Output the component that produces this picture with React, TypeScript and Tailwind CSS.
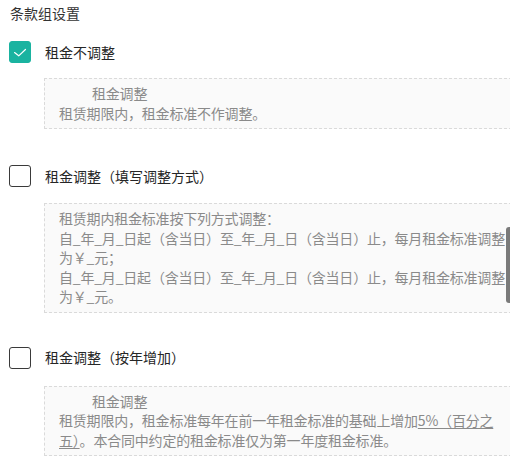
import React, { useState } from "react";

const Check: React.FC<{ checked: boolean; onClick: () => void }> = ({ checked, onClick }) => (
  <button
    onClick={onClick}
    className={`w-[22px] h-[22px] shrink-0 rounded-[3px] flex items-center justify-center ${
      checked ? "bg-[#1ab3a0] border border-[#1ab3a0]" : "bg-white border border-[#3a3a3a]"
    }`}
  >
    {checked && (
      <svg width="22" height="22" viewBox="0 0 22 22" fill="none">
        <path d="M5 11.6 L9.6 15.2 L17 8.2" stroke="white" strokeWidth="1.3" strokeLinecap="round" strokeLinejoin="round" />
      </svg>
    )}
  </button>
);

export default function App() {
  const [picked, setPicked] = useState(0);

  return (
    <div className="relative w-[510px] h-[463px] overflow-hidden bg-white font-['Noto_Sans_CJK_SC',sans-serif]">
      <div className="pl-[9px] pt-[3px]">
        <h2 className="pl-[1px] text-[14px] leading-[20px] text-[#333]">条款组设置</h2>

        {/* 租金不调整 */}
        <div className="mt-[18px] flex items-center gap-[14px]">
          <Check checked={picked === 0} onClick={() => setPicked(0)} />
          <span className="text-[14px] text-[#262626]">租金不调整</span>
        </div>
        <div className="ml-[35px] mt-[15px] w-[478px] border border-dashed border-[#dadada] bg-[#fafafa] px-[14px] py-[5px] text-[14px] leading-[19.5px] tracking-[-0.2px] text-[#8a8a8a]">
          <div className="pl-[33px]">租金调整</div>
          <div>租赁期限内，租金标准不作调整。</div>
        </div>

        {/* 填写调整方式 */}
        <div className="mt-[36px] flex items-center gap-[14px]">
          <Check checked={picked === 1} onClick={() => setPicked(1)} />
          <span className="text-[14px] text-[#262626]">租金调整（填写调整方式）</span>
        </div>
        <div className="ml-[35px] mt-[16px] w-[478px] border border-dashed border-[#dadada] bg-[#fafafa] px-[14px] py-[5px] text-[14px] leading-[19.5px] tracking-[-0.2px] text-[#8a8a8a]">
          <div>租赁期内租金标准按下列方式调整：</div>
          <div>自_年_月_日起（含当日）至_年_月_日（含当日）止，每月租金标准调整为￥_元；</div>
          <div>自_年_月_日起（含当日）至_年_月_日（含当日）止，每月租金标准调整为￥_元。</div>
        </div>

        {/* 按年增加 */}
        <div className="mt-[34px] flex items-center gap-[14px]">
          <Check checked={picked === 2} onClick={() => setPicked(2)} />
          <span className="text-[14px] text-[#262626]">租金调整（按年增加）</span>
        </div>
        <div className="ml-[35px] mt-[17px] w-[478px] border border-dashed border-[#dadada] bg-[#fafafa] px-[14px] py-[5px] text-[14px] leading-[19.5px] tracking-[-0.2px] text-[#8a8a8a]">
          <div className="pl-[33px]">租金调整</div>
          <p>
            租赁期限内，租金标准每年在前一年租金标准的基础上增加<u className="underline-offset-2">5%（百分之五）</u>。本合同中约定的租金标准仅为第一年度租金标准。
          </p>
        </div>
      </div>

      {/* overlay scrollbar thumb */}
      <div className="absolute right-0 top-[227px] w-[4px] h-[76px] rounded-l-[3px] bg-[#7a7a7a]" />
    </div>
  );
}
